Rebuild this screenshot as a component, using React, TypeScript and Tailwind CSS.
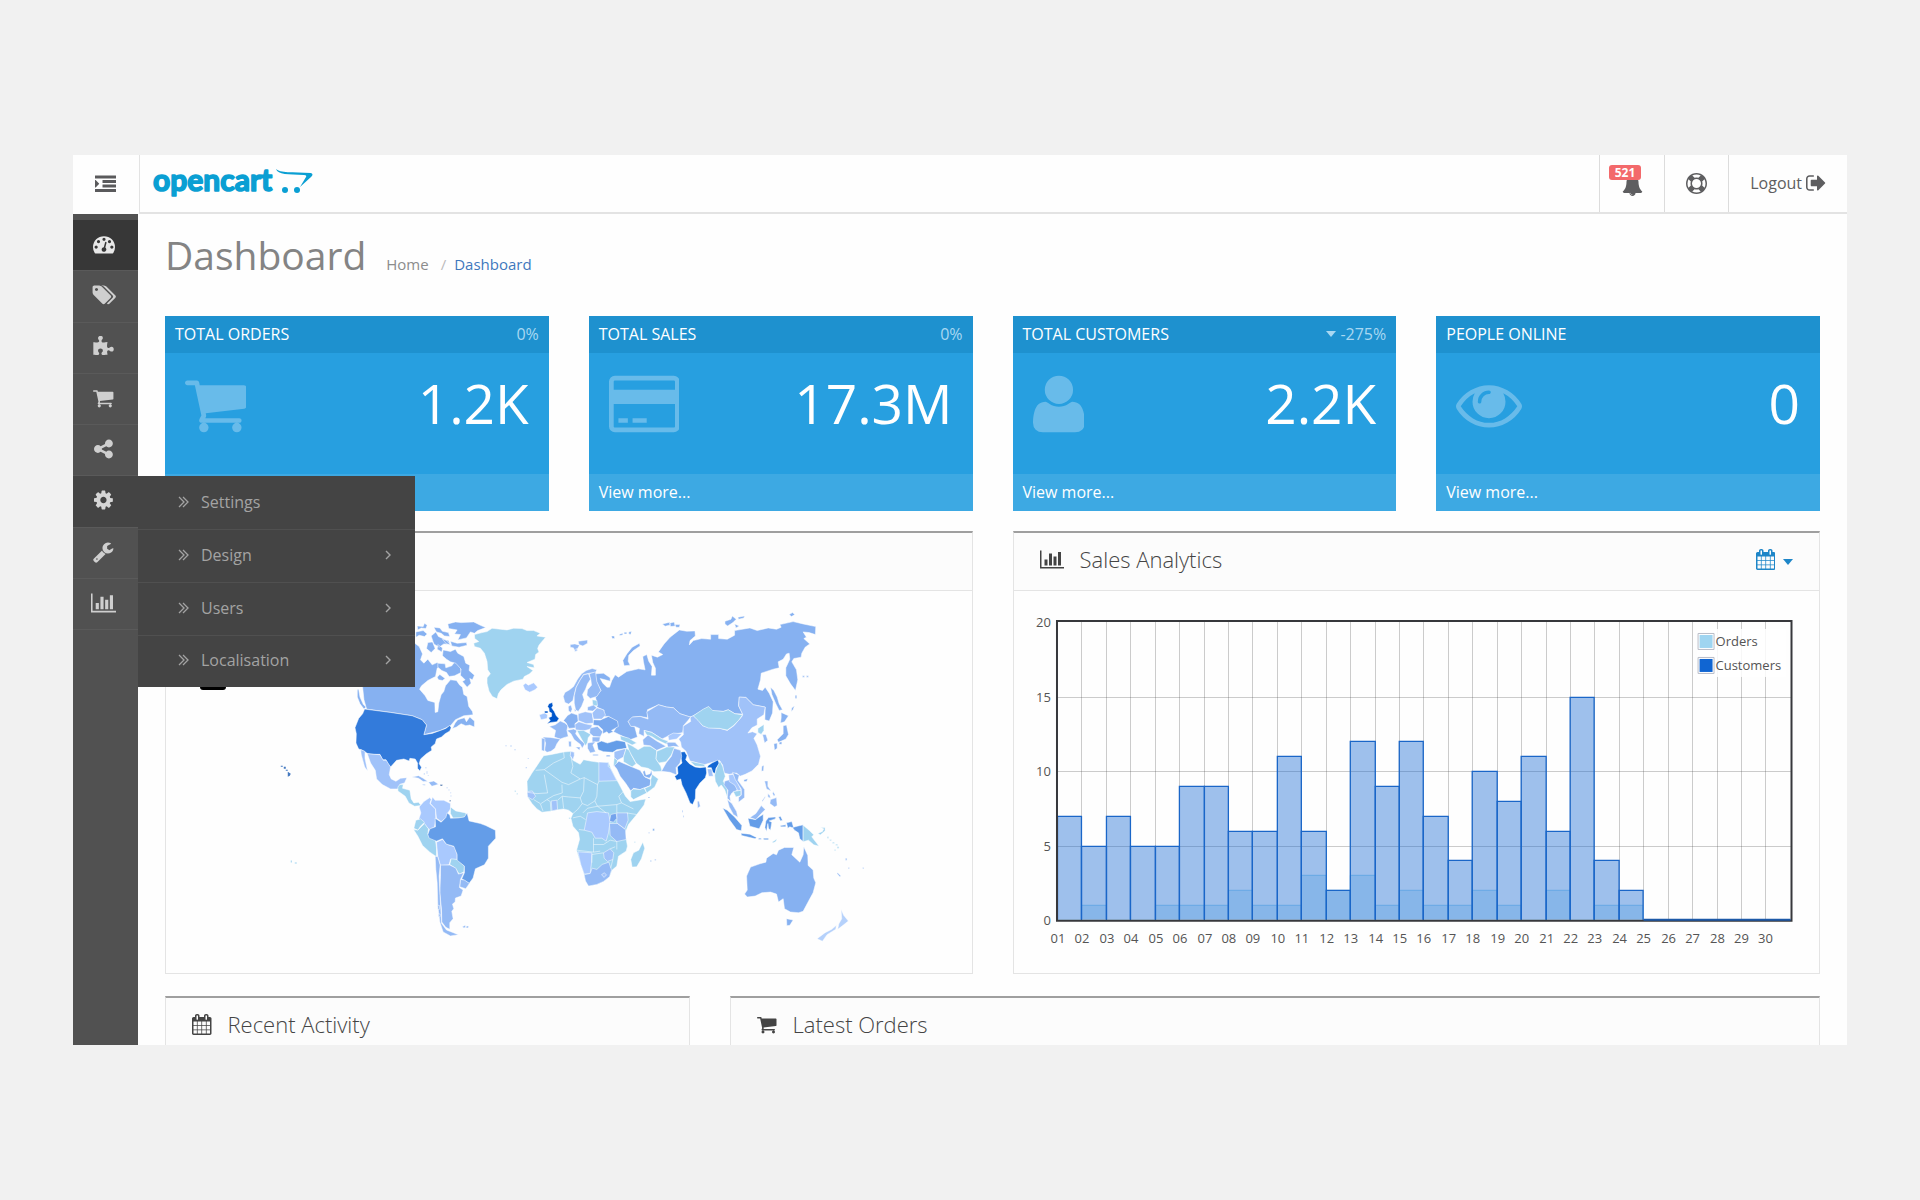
import type { ReactNode } from "react";

type Glyph = { box: string; d: string };

const ICONS: Record<string, Glyph> = {
  cog: {
    box: "128 0 1536 1792",
    d: "M1152 896q0-106-75-181t-181-75-181 75-75 181 75 181 181 75 181-75 75-181zm512-109v222q0 12-8 23t-20 13l-185 28q-19 54-39 91 35 50 107 138 10 12 10 25t-9 23q-27 37-99 108t-94 71q-12 0-26-9l-138-108q-44 23-91 38-16 136-29 186-7 28-36 28h-222q-14 0-24.5-8.5t-11.5-21.5l-28-184q-49-16-90-37l-141 107q-10 9-25 9-14 0-25-11-126-114-165-168-7-10-7-23 0-12 8-23 15-21 51-66.5t54-70.5q-27-50-41-99l-183-27q-13-2-21-12.5t-8-23.5v-222q0-12 8-23t19-13l186-28q14-46 39-92-40-57-107-138-10-12-10-24 0-10 9-23 26-36 98.5-107.5t94.5-71.5q13 0 26 10l138 107q44-23 91-38 16-136 29-186 7-28 36-28h222q14 0 24.5 8.5t11.5 21.5l28 184q49 16 90 37l142-107q9-9 24-9 13 0 25 10 129 119 165 170 7 8 7 22 0 12-8 23-15 21-51 66.5t-54 70.5q26 50 41 98l183 28q13 2 21 12.5t8 23.5z",
  },
  cart: {
    box: "64 0 1664 1792",
    d: "M704 1536q0 52-38 90t-90 38-90-38-38-90 38-90 90-38 90 38 38 90zm896 0q0 52-38 90t-90 38-90-38-38-90 38-90 90-38 90 38 38 90zm128-1088v512q0 24-16.5 42.5t-40.5 21.5l-1044 122q13 60 13 70 0 16-24 64h920q26 0 45 19t19 45-19 45-45 19h-1024q-26 0-45-19t-19-45q0-11 8-31.5t16-36 21.5-40 15.5-29.5l-177-823h-204q-26 0-45-19t-19-45 19-45 45-19h256q16 0 28.5 6.5t19.5 15.5 13 24.5 8 26 5.5 29.5 4.5 26h1201q26 0 45 19t19 45z",
  },
  chart: {
    box: "0 0 2048 1792",
    d: "M640 896v512h-256v-512h256zm384-512v1024h-256v-1024h256zm1024 1152v128h-2048v-1536h128v1408h1920zm-640-896v768h-256v-768h256zm384-384v1152h-256v-1152h256z",
  },
  calendar: {
    box: "64 0 1664 1792",
    d: "M192 1664h288v-288h-288v288zm352 0h320v-288h-320v288zm-352-352h288v-320h-288v320zm352 0h320v-320h-320v320zm-352-384h288v-288h-288v288zm736 736h320v-288h-320v288zm-384-736h320v-288h-320v288zm768 736h288v-288h-288v288zm-384-352h320v-320h-320v320zm-352-864v-288q0-13-9.5-22.5t-22.5-9.5h-64q-13 0-22.5 9.5t-9.5 22.5v288q0 13 9.5 22.5t22.5 9.5h64q13 0 22.5-9.5t9.5-22.5zm736 864h288v-320h-288v320zm-384-384h320v-288h-320v288zm384 0h288v-288h-288v288zm32-480v-288q0-13-9.5-22.5t-22.5-9.5h-64q-13 0-22.5 9.5t-9.5 22.5v288q0 13 9.5 22.5t22.5 9.5h64q13 0 22.5-9.5t9.5-22.5zm384-64v1280q0 52-38 90t-90 38h-1408q-52 0-90-38t-38-90v-1280q0-52 38-90t90-38h128v-96q0-66 47-113t113-47h64q66 0 113 47t47 113v96h384v-96q0-66 47-113t113-47h64q66 0 113 47t47 113v96h128q52 0 90 38t38 90z",
  },
  share: {
    box: "128 0 1536 1792",
    d: "M1344 1024q133 0 226.5 93.5t93.5 226.5-93.5 226.5-226.5 93.5-226.5-93.5-93.5-226.5q0-12 2-34l-360-180q-92 86-218 86-133 0-226.5-93.5t-93.5-226.5 93.5-226.5 226.5-93.5q126 0 218 86l360-180q-2-22-2-34 0-133 93.5-226.5t226.5-93.5 226.5 93.5 93.5 226.5-93.5 226.5-226.5 93.5q-126 0-218-86l-360 180q2 22 2 34t-2 34l360 180q92-86 218-86z",
  },
  wrench: {
    box: "64 0 1664 1792",
    d: "M448 1472q0-26-19-45t-45-19-45 19-19 45 19 45 45 19 45-19 19-45zm644-420l-682 682q-37 37-90 37-52 0-91-37l-106-108q-38-36-38-90 0-53 38-91l681-681q39 98 114.5 173.5t173.5 114.5zm634-435q0 39-23 106-47 134-164.5 217.5t-258.5 83.5q-185 0-316.5-131.5t-131.5-316.5 131.5-316.5 316.5-131.5q58 0 121.5 16.5t107.5 46.5q16 11 16 28t-16 28l-293 169v224l193 107q5-3 79-48.5t135.5-81 70.5-35.5q15 0 23.5 10t8.5 25z",
  },
  tags: {
    box: "0 0 2048 1792",
    d: "M576 448q0-53-37.5-90.5t-90.5-37.5-90.5 37.5-37.5 90.5 37.5 90.5 90.5 37.5 90.5-37.5 37.5-90.5zm1067 576q0 53-37 90l-491 492q-39 37-91 37-53 0-90-37l-715-716q-38-37-64.5-101t-26.5-117v-416q0-52 38-90t90-38h416q53 0 117 26.5t102 64.5l715 714q37 39 37 91zm384 0q0 53-37 90l-491 492q-39 37-91 37-36 0-59-14t-53-45l470-470q37-37 37-90 0-52-37-91l-715-714q-38-38-102-64.5t-117-26.5h224q53 0 117 26.5t102 64.5l715 714q37 39 37 91z",
  },
  gauge: {
    box: "0 0 1792 1792",
    d: "M384 1152q0-53-37.5-90.5t-90.5-37.5-90.5 37.5-37.5 90.5 37.5 90.5 90.5 37.5 90.5-37.5 37.5-90.5zm192-448q0-53-37.5-90.5t-90.5-37.5-90.5 37.5-37.5 90.5 37.5 90.5 90.5 37.5 90.5-37.5 37.5-90.5zm428 481l101-382q6-26-7.5-48.5t-38.5-29.5-48 6.5-30 39.5l-101 382q-60 5-107 43.5t-63 98.5q-20 77 20 146t117 89 146-20 89-117q16-60-6-117t-72-91zm660-33q0-53-37.5-90.5t-90.5-37.5-90.5 37.5-37.5 90.5 37.5 90.5 90.5 37.5 90.5-37.5 37.5-90.5zm-640-640q0-53-37.5-90.5t-90.5-37.5-90.5 37.5-37.5 90.5 37.5 90.5 90.5 37.5 90.5-37.5 37.5-90.5zm448 192q0-53-37.5-90.5t-90.5-37.5-90.5 37.5-37.5 90.5 37.5 90.5 90.5 37.5 90.5-37.5 37.5-90.5zm320 448q0 261-141 483-19 29-54 29h-1402q-35 0-54-29-141-221-141-483 0-182 71-348t191-286 286-191 348-71 348 71 286 191 191 286 71 348z",
  },
  puzzle: {
    box: "64 0 1728 1792",
    d: "M1755 1083q0 81-44.5 135t-123.5 54q-41 0-77.5-17.5t-59-38-56.5-38-71-17.5q-110 0-110 124 0 39 16 115t15 115v5q-22 0-33 1-34 3-97.5 11.5t-115.5 13.5-98 5q-61 0-103-26.5t-42-83.5q0-37 17.5-71t38-56.5 38-59 17.5-77.5q0-79-54-123.5t-135-44.5q-84 0-143 45.5t-59 127.5q0 43 15 83t33.5 64.5 33.5 53 15 50.5q0 45-46 89-37 35-117 35-95 0-245-24-9-2-27.5-4t-27.5-4l-13-2q-1 0-3-1-2 0-2-1v-1024q2 1 17.5 3.5t34 5 21.5 3.5q150 24 245 24 80 0 117-35 46-44 46-89 0-22-15-50.5t-33.5-53-33.5-64.5-15-83q0-82 59-127.5t144-45.5q80 0 134 44.5t54 123.5q0 41-17.5 77.5t-38 59-38 56.5-17.5 71q0 57 42 83.5t103 26.5q64 0 180-15t163-17v2q-1 2-3.5 17.5t-5 34-3.5 21.5q-24 150-24 245 0 80 35 117 44 46 89 46 22 0 50.5-15t53-33.5 64.5-33.5 83-15q82 0 127.5 59t45.5 143z",
  },
  signOut: {
    box: "64 0 1600 1792",
    d: "M704 1440q0 4 1 20t.5 26.5-3 23.5-10 19.5-20.5 6.5h-320q-119 0-203.5-84.5t-84.5-203.5v-704q0-119 84.5-203.5t203.5-84.5h320q13 0 22.5 9.5t9.5 22.5q0 4 1 20t.5 26.5-3 23.5-10 19.5-20.5 6.5h-320q-66 0-113 47t-47 113v704q0 66 47 113t113 47h312l11.5 1 11.5 3 8 5.5 7 9 2 13.5zm928-544q0 26-19 45l-544 544q-19 19-45 19t-45-19-19-45v-288h-448q-26 0-45-19t-19-45v-384q0-26 19-45t45-19h448v-288q0-26 19-45t45-19 45 19l544 544q19 19 19 45z",
  },
  user: {
    box: "192 0 1408 1792",
    d: "M1600 1405q0 120-73 189.5t-194 69.5h-874q-121 0-194-69.5t-73-189.5q0-53 3.5-103.5t14-109 26.5-108.5 43-97.5 62-81 85.5-53.5 111.5-20q9 0 42 21.5t74.5 48 108 48 133.5 21.5 133.5-21.5 108-48 74.5-48 42-21.5q61 0 111.5 20t85.5 53.5 62 81 43 97.5 26.5 108.5 14 109 3.5 103.5zm-320-893q0 159-112.5 271.5t-271.5 112.5-271.5-112.5-112.5-271.5 112.5-271.5 271.5-112.5 271.5 112.5 112.5 271.5z",
  },
  eye: {
    box: "0 0 1792 1792",
    d: "M1664 960q-152-236-381-353 61 104 61 225 0 185-131.5 316.5t-316.5 131.5-316.5-131.5-131.5-316.5q0-121 61-225-229 117-381 353 133 205 333.5 326.5t434.5 121.5 434.5-121.5 333.5-326.5zm-720-384q0-20-14-34t-34-14q-125 0-214.5 89.5t-89.5 214.5q0 20 14 34t34 14 34-14 14-34q0-86 61-147t147-61q20 0 34-14t14-34zm848 384q0 34-20 69-140 230-376.5 368.5t-499.5 138.5-499.5-139-376.5-368q-20-35-20-69t20-69q140-229 376.5-368t499.5-139 499.5 139 376.5 368q20 35 20 69z",
  },
  card: {
    box: "0 0 1920 1792",
    d: "M1760 128q66 0 113 47t47 113v1216q0 66-47 113t-113 47h-1600q-66 0-113-47t-47-113v-1216q0-66 47-113t113-47h1600zm-1600 128q-13 0-22.5 9.5t-9.5 22.5v224h1664v-224q0-13-9.5-22.5t-22.5-9.5h-1600zm1600 1280q13 0 22.5-9.5t9.5-22.5v-608h-1664v608q0 13 9.5 22.5t22.5 9.5h1600zm-1504-128v-128h256v128h-256zm384 0v-128h384v128h-384z",
  },
  ring: {
    box: "0 0 1792 1792",
    d: "M896 0q182 0 348 71t286 191 191 286 71 348-71 348-191 286-286 191-348 71-348-71-286-191-191-286-71-348 71-348 191-286 286-191 348-71zm0 128q-190 0-361 90l194 194q82-28 167-28t167 28l194-194q-171-90-361-90zm-678 1129l194-194q-28-82-28-167t28-167l-194-194q-90 171-90 361t90 361zm678 407q190 0 361-90l-194-194q-82 28-167 28t-167-28l-194 194q171 90 361 90zm0-384q159 0 271.5-112.5t112.5-271.5-112.5-271.5-271.5-112.5-271.5 112.5-112.5 271.5 112.5 271.5 271.5 112.5zm484-217l194 194q90-171 90-361t-90-361l-194 194q28 82 28 167t-28 167z",
  },
  bell: {
    box: "0 0 1792 1792",
    d: "M912 1696q0-16-16-16-59 0-101.5-42.5t-42.5-101.5q0-16-16-16t-16 16q0 73 51.5 124.5t124.5 51.5q16 0 16-16zm816-288q0 52-38 90t-90 38h-448q0 106-75 181t-181 75-181-75-75-181h-448q-52 0-90-38t-38-90q50-42 91-88t85-119.5 74.5-158.5 50-206 19.5-260q0-152 117-282.5t307-158.5q-8-19-8-39 0-40 28-68t68-28 68 28 28 68q0 20-8 39 190 28 307 158.5t117 282.5q0 139 19.5 260t50 206 74.5 158.5 85 119.5 91 88z",
  },
  indent: {
    box: "0 0 1792 1792",
    d: "M352 832q0 14-9 23l-288 288q-9 9-23 9-13 0-22.5-9.5t-9.5-22.5v-576q0-13 9.5-22.5t22.5-9.5q14 0 23 9l288 288q9 9 9 23zm1440 480v192q0 13-9.5 22.5t-22.5 9.5h-1728q-13 0-22.5-9.5t-9.5-22.5v-192q0-13 9.5-22.5t22.5-9.5h1728q13 0 22.5 9.5t9.5 22.5zm0-384v192q0 13-9.5 22.5t-22.5 9.5h-1088q-13 0-22.5-9.5t-9.5-22.5v-192q0-13 9.5-22.5t22.5-9.5h1088q13 0 22.5 9.5t9.5 22.5zm0-384v192q0 13-9.5 22.5t-22.5 9.5h-1088q-13 0-22.5-9.5t-9.5-22.5v-192q0-13 9.5-22.5t22.5-9.5h1088q13 0 22.5 9.5t9.5 22.5zm0-384v192q0 13-9.5 22.5t-22.5 9.5h-1728q-13 0-22.5-9.5t-9.5-22.5v-192q0-13 9.5-22.5t22.5-9.5h1728q13 0 22.5 9.5t9.5 22.5z",
  },
};

function Icon({ name, className }: { name: string; className: string }) {
  const g = ICONS[name];
  return (
    <svg viewBox={g.box} className={`w-auto shrink-0 fill-current ${className}`} aria-hidden="true">
      <path d={g.d} />
    </svg>
  );
}

function Logo() {
  return (
    <svg viewBox="0 0 164 52" className="h-[52px] w-[164px]" role="img" aria-label="opencart">
      <text
        x="1"
        y="36"
        fontFamily="Lato, sans-serif"
        fontWeight="700"
        fontSize="30"
        fill="#0a9fd3"
        stroke="#0a9fd3"
        strokeWidth="1.6"
        strokeLinejoin="round"
      >
        opencart
      </text>
      <path d="M124 14C128 18 140 17 159 18Q162 19 159 22L148 32 154 22Q155 20 152 20C136 19 126 20 124 14Z" fill="#0a9fd3" />
      <circle cx="133" cy="35" r="3" fill="#0a9fd3" />
      <circle cx="145" cy="35" r="3" fill="#0a9fd3" />
    </svg>
  );
}

const NAV = [
  { icon: "gauge", label: "Dashboard" },
  { icon: "tags", label: "Catalog" },
  { icon: "puzzle", label: "Extensions" },
  { icon: "cart", label: "Sales" },
  { icon: "share", label: "Marketing" },
  { icon: "cog", label: "System" },
  { icon: "wrench", label: "Tools" },
  { icon: "chart", label: "Reports" },
];

const SUBMENU = [
  { label: "Settings", more: false },
  { label: "Design", more: true },
  { label: "Users", more: true },
  { label: "Localisation", more: true },
];

function SystemMenu() {
  return (
    <ul className="absolute top-0 left-full z-20 grid h-[211px] w-[277px] grid-rows-4 bg-[#444444]">
      {SUBMENU.map((item, i) => (
        <li key={item.label} className={i > 0 ? "border-t border-[#505050]" : ""}>
          <a href="#" className="flex h-full items-center pr-6 pb-0.5 pl-10 text-base text-[#a3a3a3]">
            <svg viewBox="0 0 11 12" className="mr-3 h-3 w-[11px] fill-none stroke-current" aria-hidden="true">
              <path d="M1 1l5 5-5 5M5 1l5 5-5 5" strokeWidth="1.300" />
            </svg>
            <span className="flex-1">{item.label}</span>
            {item.more && (
              <svg viewBox="0 0 6 10" className="h-2.5 w-1.5 fill-none stroke-current" aria-hidden="true">
                <path d="M1 1l4 4-4 4" strokeWidth="1.400" />
              </svg>
            )}
          </a>
        </li>
      ))}
    </ul>
  );
}

function Sidebar() {
  return (
    <nav className="w-[65px] shrink-0 bg-[#515151] pt-1.5">
      <ul className="grid h-[410px] grid-rows-8">
        {NAV.map((item) => {
          const tone =
            item.icon === "gauge"
              ? "bg-[#373737] text-[#e8e8e8]"
              : item.icon === "cog"
                ? "bg-[#444444] text-[#d6d6d6]"
                : "text-[#cfcfcf]";
          return (
            <li key={item.icon} className={`relative border-b border-[#5a5a5a] ${tone}`}>
              <a href="#" aria-label={item.label} className="flex h-full items-center justify-center pr-1 pb-0.5">
                <Icon name={item.icon} className="h-[22px]" />
              </a>
              {item.icon === "cog" && <SystemMenu />}
            </li>
          );
        })}
      </ul>
    </nav>
  );
}

function Header() {
  return (
    <header className="flex h-[59px] shrink-0">
      <button type="button" aria-label="Toggle menu" className="flex w-[66px] items-center justify-center pr-0.5 text-[#5a5a5c]">
        <Icon name="indent" className="h-[21px]" />
      </button>
      <div className="flex flex-1 border-b-2 border-l border-[#e3e3e3] text-[#5e5e60]">
        <a href="#" className="flex-1 pl-3">
          <Logo />
        </a>
        <button
          type="button"
          aria-label="Notifications"
          className="relative flex w-[65px] items-center justify-center border-l border-[#dcdcdc]"
        >
          <Icon name="bell" className="mt-1 h-[21px]" />
          <span className="absolute top-2.5 left-[9px] flex h-[15px] w-8 items-center justify-center rounded-[3px] bg-[#f3696b] text-xs font-bold text-white">
            521
          </span>
        </button>
        <button type="button" aria-label="Help" className="flex w-16 items-center justify-center border-l border-[#dcdcdc]">
          <Icon name="ring" className="h-[21px]" />
        </button>
        <a href="#" className="flex w-[119px] items-center justify-center gap-1 border-l border-[#dcdcdc] pb-0.5 text-base">
          Logout
          <Icon name="signOut" className="h-[22px]" />
        </a>
      </div>
    </header>
  );
}

type TileProps = { title: string; change?: string; down?: boolean; icon: string; value: string; more?: string };

function Tile({ title, change, down, icon, value, more }: TileProps) {
  return (
    <section className="flex flex-col text-white">
      <div className="flex h-[37px] items-center justify-between bg-[#1e91cf] px-2.5 pb-0.5">
        <h2 className="text-base">{title}</h2>
        {change && (
          <span className="flex items-center gap-1 text-base text-[#a9d8f2]">
            {down && (
              <svg viewBox="0 0 10 6" className="h-1.5 w-2.5 fill-current" aria-hidden="true">
                <path d="M0 0h10L5 6z" />
              </svg>
            )}
            {change}
          </span>
        )}
      </div>
      <div className="flex h-[121px] justify-between bg-[#279fe0] px-5 pt-[18px]">
        <Icon name={icon} className="h-[66px] text-[#68bbea]" />
        <span className="text-[55px] leading-[64px]">{value}</span>
      </div>
      <a href="#" aria-label={`${title}: view more`} className="flex h-[37px] items-center bg-[#3da9e3] px-2.5 pb-0.5 text-base">
        {more}
      </a>
    </section>
  );
}

type PanelProps = { icon?: string; title?: string; action?: ReactNode; children?: ReactNode; className?: string };

function Panel({ icon, title, action, children, className = "" }: PanelProps) {
  return (
    <section className={`border border-t-2 border-[#e4e4e4] border-t-[#9f9f9f] ${className}`}>
      <div className="flex h-[58px] items-center border-b border-[#e4e4e4] bg-[#fcfcfc] px-[26px] pb-1 text-[#444444]">
        {icon && <Icon name={icon} className="mr-4 h-[21px]" />}
        {title && <h2 className="text-[22px] font-light">{title}</h2>}
        {action}
      </div>
      {children}
    </section>
  );
}

const LIGHT = "#9fd3f0";
const PALE = "#a9c9fe";
const SOFT = "#a0c2f9";
const MID = "#94baf5";
const RUS = "#86b1f1";
const DEEP = "#649de8";
const USA = "#337bdb";

type Land = [string, string];

const AMERICAS: Land[] = [
  [RUS, "M50 240L66 262 70 300 78 328 150 338 215 348 245 360 258 376 250 405 300 392 330 378 345 360 370 348 398 345 396 335 385 320 380 290 370 284 366 262 358 256 348 242 330 240 315 258 310 275 302 285 295 310 292 336 284 338 283 308 262 302 254 288 237 268 243 258 262 242 285 230 290 205 300 196 290 188 275 195 262 178 250 190 240 180 246 162 236 140 220 128 180 130Z"],
  [RUS, "M292 190l22 2 2 12 18-6 10-14 16 16 2 18-20 10-16 2-8-12-14-6-12-10Z"],
  [RUS, "M308 150L330 155 345 148 352 160 370 170 376 190 388 196 386 212 402 226 396 240 388 236 392 250 380 262 366 245 374 240 360 226 362 208 346 190 330 186 318 178 306 168Z"],
  [RUS, "M322 72L345 66 362 68 400 66 420 76 436 83 412 92 402 100 390 96 378 114 352 120 360 104 342 102 350 90 325 86Z"],
  [RUS, "M280 82l18 2 8 10 18 4 4 12-16-2-10-8-14-4Z M230 78l18 2 4-10 8 6-4 10-14-2-10 6Z M226 96l22-4 12 10-8 8-16-4-10 6Z M272 108l14-12 8 14 22 10 14 14-20-2-14 10-16-10Z M262 128l14-2 8 20-12 12-14-12Z M330 124l20 6 28-2 2 8-24 6-22-4Z M306 118l18 4 6 14-12-4Z M292 134l14 10-2 12-14-8Z"],
  [RUS, "M352 360l20-6 6 12 10-14 14 12 0 18-14-6-12 2-14-6-14 10-12 4 8-16Z M290 232l8-8 16 12-8 6-12-2Z"],
  [RUS, "M50 270l4-2 4 24 10 22 8 8-6 6-12-16-8-20Z"],
  [USA, "M72 328L150 338 215 348 245 360 258 376 250 405 275 401 300 392 316 386 328 377 332 384 328 394 314 402 303 412 288 418 284 432 272 442 274 452 258 462 240 478 236 492 243 503 238 514 231 506 231 490 224 478 208 476 206 484 190 478 168 482 150 502 142 492 136 480 126 480 118 464 100 464 82 462 62 450 54 448 46 430 47 402 43 384 54 356 66 342Z"],
  [LIGHT, "M402 104L425 98 440 95 455 85 480 88 500 90 520 85 545 86 560 92 580 92 600 100 590 108 616 112 604 126 596 136 592 146 596 156 586 164 584 178 560 188 580 194 582 204 560 200 578 212 568 222 552 230 548 238 520 244 500 254 482 270 474 282 470 297 456 290 446 274 440 250 440 234 450 222 442 210 440 185 432 160 420 145 402 140 400 130 415 125 403 116Z"],
  [SOFT, "M80 462L100 464 118 465 128 482 137 482 150 502 146 525 152 538 166 545 180 536 199 534 192 550 178 554 172 568 150 568 125 555 108 538 104 512 90 490Z"],
  [SOFT, "M60 450L73 455 73 476 81 514 72 502 66 480 62 466Z"],
  [LIGHT, "M172 562L178 555 188 555 186 566 208 572 212 598 220 610 234 608 242 618 222 620 205 610 194 590 172 574Z"],
  [MID, "M214 532l20-4 14 8 14 10-14 0-14-10Z M264 548l16-4 14 10-20 6Z M246 554l8 0 0 4-8-2Z"],
  ["#2f5f9f", "M299 555h7v4h-7Z M327 601h4v5h-4Z"],
  [MID, "M254 503h4v3h-4Z M258 514h3v8h-3Z M250 520h3v5h-3Z M262 526h3v3h-3Z M318 563h4v3h-4Z M324 570h3v3h-3Z M329 578h3v3h-3Z M330 588h3v3h-3Z"],
  [PALE, "M236 622L250 606 268 594 272 600 268 612 285 628 286 656 282 682 266 690 250 672 235 658 241 640Z"],
  [PALE, "M270 612L276 592 284 602 310 602 330 612 330 628 322 640 318 654 302 666 288 656 285 628Z"],
  [LIGHT, "M330 622L346 634 376 640 378 650 365 655 338 656 330 642Z"],
  [LIGHT, "M226 662L240 658 252 668 240 680 232 692 220 686Z"],
  [LIGHT, "M219 690L232 692 252 672 264 688 262 704 285 722 288 745 288 772 268 758 246 738 232 710Z"],
  [PALE, "M288 728L306 720 318 734 342 742 350 765 350 782 330 780 326 796 300 798 292 772Z"],
  [LIGHT, "M328 795L332 778 350 780 372 800 370 818 356 824 345 806Z"],
  [DEEP, "M262 705L268 688 285 682 284 656 302 668 316 654 320 640 328 646 330 656 355 655 372 652 380 640 386 664 420 672 436 678 465 692 466 716 444 740 444 776 432 796 405 808 398 836 386 852 364 838 372 820 372 800 350 782 350 765 340 740 318 734 306 718 288 725 266 716Z"],
  [MID, "M360 840L372 842 387 852 376 868 358 862Z"],
  [MID, "M300 797L328 797 346 806 354 824 370 820 360 840 357 864 368 872 362 890 345 896 344 908 336 914 340 928 334 936 338 958 328 970 328 990 316 984 304 968 303 930 298 880 300 830Z"],
  [MID, "M284 770L292 772 299 797 296 830 298 880 301 930 303 972 318 992 354 1006 330 1010 308 998 298 968 292 920 290 850 286 810Z"],
  [MID, "M366 982l8-4 2 6-6 2Z M378 980l7 0-2 6-6 0Z M292 918h5v12h-5Z M294 944h5v8h-5Z"],
];

const WEST: Land[] = [
  [PALE, "M68 256L76 250 84 256 100 249 112 262 104 270 88 277 74 270Z"],
  [MID, "M210 134l14-2 14 4-6 10-8 10-4-12-10-2Z M234 124l28-4 0 10-14 8-12-4Z M222 150l8-4 2 6-8 4Z"],
  [RUS, "M334 108l8 0 2 8-8 0Z M358 103l10-3 0 5-10 2Z M372 97l8 0 0 5-8 0Z M386 96l8-2-2 10-6-2Z"],
  [MID, "M189 290L194 278 208 270 220 260 232 238 244 222 258 212 276 206 290 210 286 218 268 220 250 224 240 240 228 262 222 285 218 302 205 313 194 308Z"],
  [MID, "M222 288L228 262 240 240 250 225 265 222 271 238 262 252 256 268 247 284 252 300 244 320 234 335 226 330 222 310Z"],
  [MID, "M267 222L286 216 290 245 302 272 290 290 270 296 260 286 262 270 274 256 272 240Z"],
  ["#0056cb", "M146 312L156 308 158 318 154 324 162 335 168 348 176 356 170 366 152 368 140 372 150 362 145 354 154 350 154 340 147 336 146 326 142 320Z M133 334h10v6h-10Z"],
  [PALE, "M117 345L134 340 142 346 140 356 122 360Z"],
  [MID, "M147 380L165 375 180 364 194 370 203 378 200 392 204 410 190 414 180 418 162 412 166 392Z"],
  [MID, "M128 412L150 413 180 418 170 432 164 446 152 455 140 458 133 452 136 430Z"],
  [MID, "M124 415L134 417 132 455 124 452Z"],
  [RUS, "M202 347L214 340 232 346 234 364 224 372 230 384 206 386 198 370 190 362Z"],
  [MID, "M204 320l8-4 4 12-4 10-7-4Z M222 328l6 4-4 4Z"],
  [SOFT, "M234 342L255 336 276 340 280 370 258 372 234 362Z"],
  [MID, "M200 392L220 388 230 392 226 402 240 420 254 432 246 446 240 434 222 420 212 402Z M226 442l14 0-2 10Z M205 425h8v16h-7Z"],
  [SOFT, "M224 374L236 366 258 373 276 376 272 388 248 394 226 390Z"],
  [LIGHT, "M230 392L250 392 272 404 264 414 262 428 256 438 244 418Z"],
  [MID, "M270 385L292 380 308 396 300 412 280 410 268 400Z"],
  [MID, "M276 412L300 412 298 426 276 428Z"],
  [MID, "M262 430L286 426 278 436 286 456 270 460 262 446Z M278 464h16v4h-16Z M318 466h12v5h-12Z"],
  ["#7aa9ee", "M280 360L300 361 325 350 352 364 355 380 334 392 340 396 326 402 320 396 308 402 308 390 295 378 279 376Z"],
  [SOFT, "M276 340L290 324 310 330 316 346 305 358 280 358Z"],
  [LIGHT, "M276 300l14 2 2 16-14 0Z"],
  [MID, "M262 322l18-6 10 8-12 10-16-2Z"],
  [DEEP, "M290 430L304 424 322 430 350 422 375 426 380 446 350 450 338 458 310 456 294 450Z"],
  [LIGHT, "M130 468L150 465 190 457 212 455 212 470 218 482 240 494 250 480 270 484 296 488 325 488 332 506 344 530 356 552 376 590 390 606 437 598 432 616 410 645 385 675 375 700 382 740 378 755 355 770 350 800 336 812 328 832 310 846 290 855 265 860 256 845 250 820 240 790 229 752 238 720 235 700 218 680 212 656 218 642 205 632 190 628 165 632 150 635 125 638 110 628 95 612 82 592 80 545 95 520 110 498Z"],
  [SOFT, "M212 455L222 458 222 468 218 480 210 468Z"],
  [PALE, "M296 487L325 489 324 500 332 508 350 543 296 545Z"],
  [PALE, "M262 640L290 636 325 640 330 665 325 700 318 725 305 716 285 716 275 698 252 692 258 662Z"],
  [MID, "M328 672L352 672 376 690 378 720 350 726 330 708Z"],
  [SOFT, "M350 640L382 640 384 662 374 688 350 670Z"],
  ["#74a3ec", "M332 645L348 641 350 656 340 668 328 665Z"],
  [PALE, "M233 757L275 760 274 790 270 822 252 824 242 796Z"],
  [MID, "M252 826L270 822 276 806 290 810 306 795 326 788 334 812 328 832 310 846 290 855 265 860 256 845Z"],
  [SOFT, "M310 760L330 748 341 760 338 780 322 786 312 776Z"],
  [SOFT, "M153 604L170 602 172 630 155 634Z"],
  [SOFT, "M80 576L96 574 106 590 96 600 82 592Z"],
  [SOFT, "M304 826L312 820 319 826 312 834Z"],
  [LIGHT, "M428 728L434 746 424 778 410 802 396 803 392 780 400 760 416 752Z"],
  [SOFT, "M342 456L378 446 370 472 352 482 342 474Z"],
  [LIGHT, "M378 446L388 452 394 466 408 492 396 502 370 486 370 472Z M342 474l10 8-2 14-10 4Z"],
  [RUS, "M342 498L356 485 396 502 420 512 434 532 452 540 450 558 420 570 400 566 392 574 376 550 360 530 350 508Z"],
  [LIGHT, "M392 574L400 568 420 570 432 565 440 580 400 600 392 592Z"],
  [LIGHT, "M452 540L456 524 475 538 464 562 440 580 434 566 452 558Z"],
  [RUS, "M428 516l6-4 4 14 12-4 4-12 2 14-8 12-16-6Z"],
  [LIGHT, "M360 408L385 415 410 430 396 436 384 430 362 420Z"],
  [LIGHT, "M380 430L398 440 414 450 432 440 450 440 470 452 468 478 482 500 486 515 462 516 444 506 424 502 408 490 394 466 386 450Z"],
  [MID, "M384 365L396 352 420 350 444 358 440 336 475 315 500 322 520 324 540 342 572 352 564 362 550 378 548 398 506 408 486 418 455 398 432 392 432 410 416 402 418 386 404 380 392 380Z"],
  [LIGHT, "M432 392L455 398 486 418 504 424 500 434 470 420 455 410 440 406Z"],
  [MID, "M428 420L444 406 470 424 498 440 470 452 450 438 430 436Z"],
  [PALE, "M504 408L520 400 546 402 530 418 506 422Z"],
  [MID, "M500 428L525 428 538 442 520 440 504 444Z"],
  [LIGHT, "M470 455L500 442 524 442 514 466 498 486 476 490 468 478Z"],
  [MID, "M484 515L498 490 514 470 522 446 542 452 545 470 540 490 528 504 530 526 510 518Z"],
  [DEEP, "M444 592h5v3h-5Z M458 688h5v6h-5Z M450 783h4v3h-4Z M464 779h4v3h-4Z"],
  [MID, "M15 437h4v3h-4Z M30 437h4v4h-4Z M42 448h4v4h-4Z M76 502h4v4h-4Z M82 475h4v3h-4Z M546 632h3v6h-3Z M549 648h3v5h-3Z M445 698h4v3h-4Z"],
  [LIGHT, "M43 573h4v4h-4Z M49 581h4v4h-4Z M206 654h4v4h-4Z M402 727h4v3h-4Z"],
];

const AFRICA_BORDERS =
  "M190 457L192 475 160 490 132 510 106 512 M132 510L185 548 205 555 240 538 M132 525L142 580 110 582 80 578 M212 470L218 500 212 520 240 538 M240 538L252 534 292 555 296 545 M292 555L290 590 284 604 292 620 M185 555L186 580 160 588 140 600 122 612 M186 590L205 592 240 595 250 575 252 534 M240 595L246 612 232 630 218 642 M246 612L262 618 284 604 M248 640L262 626 292 620 318 640 M292 620L350 615 364 610 356 590 370 575 M350 615L350 640 M380 640L410 645 M364 610L400 628 M100 600L120 612 128 634 M140 600L150 606 152 634 M172 602L186 590 190 626 M218 655L240 650 256 660 M236 690L252 692 M229 752L280 758 300 755 M280 716L280 758 M280 735L310 735 330 722 350 726 350 750 M275 790L275 765 310 760 M330 748L345 742 M338 780L332 805";

const EAST: Land[] = [
  [RUS, "M-135 222L-110 220 -90 234 -90 244 -105 240 -120 236 -112 250 -100 262 -92 262 -85 242 -75 225 -65 232 -40 215 -5 207 15 210 10 186 8 170 20 164 26 184 36 200 34 226 46 226 46 205 38 188 34 166 52 172 68 164 55 156 72 132 90 112 118 90 140 94 165 93 166 108 150 122 148 135 160 122 185 116 212 118 212 104 236 104 236 116 262 118 284 106 284 92 330 84 352 92 385 84 410 88 424 82 420 74 460 65 490 72 528 80 527 104 508 98 490 96 500 112 492 116 510 132 496 142 486 160 484 172 462 176 456 186 470 210 474 240 467 272 452 252 438 228 438 204 450 178 448 160 440 162 430 178 415 186 418 204 400 208 364 220 362 240 354 268 368 272 376 262 388 280 400 306 398 340 388 364 375 360 376 322 340 315 318 293 298 292 296 318 308 343 285 342 265 330 250 335 215 333 206 322 190 330 160 348 150 352 120 342 100 324 80 322 55 315 22 330 22 354 0 350 -22 352 -36 365 -28 378 -16 382 -8 412 -30 420 -60 406 -80 396 -70 380 -68 366 -95 350 -115 350 -108 332 -130 322 -132 302 -134 292 -118 272 -132 245Z"],
  [RUS, "M-52 182L-40 162 -24 142 -2 130 0 138 -20 152 -34 166 -36 184 -30 196 -48 198Z"],
  [RUS, "M67 72l22-5 2 8-16 4Z M88 70l14-4 4 12-14 2Z M104 74l16 0-2 8-10 0Z M255 64l18-6 4-10 12 10-10 10-16 10-8-6Z M294 52l20-4-2 6-16 4Z M284 72l14 6-10 6Z M448 44l10-6 7 6-10 6Z"],
  [RUS, "M392 262L402 272 412 292 418 312 428 330 418 332 408 312 396 284Z M466 286h5v10h-5Z M456 324l8-5-4 10-6 6Z M488 228h6v4h-6Z M500 228h6v4h-6Z"],
  [SOFT, "M150 352L160 348 176 362 188 378 210 384 240 386 262 392 282 378 306 350 308 343 296 318 298 292 318 293 340 315 376 322 372 345 352 358 352 376 336 384 324 400 338 396 352 402 342 416 352 436 362 470 356 494 336 514 316 524 300 530 290 520 268 524 252 520 248 496 238 482 210 490 190 496 165 488 150 484 138 455 124 442 122 428 116 418 130 405 128 380 152 365Z"],
  [LIGHT, "M160 348L190 328 206 320 218 332 250 335 265 330 285 342 308 345 296 362 280 378 262 391 240 386 205 385 188 378 174 362Z"],
  ["#1367d4", "M116 458L134 456 141 468 137 480 148 492 165 502 180 504 198 502 200 520 196 534 180 550 167 570 166 596 158 615 150 610 138 580 126 556 122 538 110 542 104 530 114 522 112 502 126 490 122 472Z M204 498L216 490 234 481 238 492 228 506 226 522 218 518 214 504 202 504Z"],
  [LIGHT, "M150 485L165 488 192 494 196 501 165 499Z"],
  [SOFT, "M202 508L215 508 220 530 206 530Z"],
  [MID, "M172 606l5-2 4 16-8 6Z"],
  [LIGHT, "M224 526L230 506 240 484 248 500 256 530 250 545 262 566 264 598 254 570 244 556 236 564 226 545Z"],
  [MID, "M254 545L268 540 290 558 292 572 276 580 270 590 272 606 262 596 264 572 252 556Z"],
  [PALE, "M266 526L280 524 304 572 294 574 284 556 268 546Z"],
  [MID, "M278 518L298 526 294 542 314 570 314 594 296 608 296 594 304 586 304 568 286 540Z"],
  [LIGHT, "M280 576L303 572 303 588 288 592Z"],
  [MID, "M262 600L276 612 290 636 294 654 280 644 268 622Z"],
  [LIGHT, "M354 386L372 374 372 392 364 404 354 398Z"],
  [MID, "M368 404L378 404 384 422 374 430Z"],
  [RUS, "M424 338L446 348 434 366 422 370 424 354Z M430 378L440 376 446 404 438 418 416 428 412 420 430 402Z M402 432l10-2 0 16-8 6Z M418 428l8-2 0 8-8 0Z"],
  [RUS, "M366 500l6-3-1 16-6 2Z M312 540l12-3-4 9-8 0Z"],
  [MID, "M374 544L384 544 384 560 394 574 380 568Z M392 600L410 594 412 618 404 622 390 612Z M366 604l10-14 0 4-8 12Z M384 582l6 6 2 8-8-4Z M400 576l6 10-4 4-4-8Z"],
  [DEEP, "M248 625L262 632 284 652 306 678 304 694 290 690 268 660Z M303 701L330 704 350 714 346 718 305 708Z M324 656L346 660 370 644 370 662 358 688 330 680Z"],
  [MID, "M330 654L348 642 364 618 376 630 362 644 348 660Z"],
  [DEEP, "M378 664L386 654 408 652 406 658 388 664 396 668 392 692 386 686 384 672 380 696 375 684Z M416 652l6-2 6 12-6 2Z M422 678l16-2 0 6-16 0Z M440 670l16-4 6 20-12-4-6 4Z M356 716h8v4h-8Z M370 716l16 0 0 5-14 0Z"],
  [LIGHT, "M396 728l16-10-4 8-8 4Z"],
  [DEEP, "M458 684L472 680 490 676 490 726 480 718 476 700 464 692Z"],
  [LIGHT, "M490 677L508 692 522 706 516 712 538 740 522 736 506 722 490 727Z M534 702l14-6 4-8-10-4 14 0 0 10-14 12Z M562 712h5v4h-5Z M570 720h5v4h-5Z M578 728h6v4h-6Z M588 734h6v4h-6Z M592 742h6v4h-6Z M584 750h4v4h-4Z"],
  [MID, "M617 776h5v6h-5Z M625 804h4v4h-4Z M669 804h4v4h-4Z M594 820l10 10-4 2-8-10Z"],
  [RUS, "M314 884L322 872 320 830 332 803 360 793 378 788 380 776 400 762 410 766 416 752 434 744 462 744 456 766 480 788 490 766 492 742 504 768 505 798 520 812 522 836 528 850 520 880 508 902 490 936 476 940 452 938 434 928 430 898 416 908 410 884 392 878 366 880 346 890 322 893Z M440 958L460 962 450 978 441 979Z"],
  ["#b5d1fb", "M604 930L612 948 626 965 610 978 594 990 597 974 606 958Z M590 978L588 990 562 1006 548 1026 532 1018 556 1000 576 990Z"],
];

function LandGroup({ x, y, lands }: { x: number; y: number; lands: Land[] }) {
  return (
    <g transform={`translate(${x} ${y}) scale(0.3333)`}>
      {lands.map(([fill, d], i) => (
        <path key={i} d={d} fill={fill} />
      ))}
    </g>
  );
}

function WorldMap() {
  return (
    <div className="relative">
      <svg viewBox="165 591 807 382" className="block w-full" role="img" aria-label="World map of orders">
        <g stroke="#ffffff" strokeOpacity="0.75" strokeWidth="2" strokeLinejoin="round">
          <LandGroup x={340} y={600} lands={AMERICAS} />
          <LandGroup x={640} y={600} lands={EAST} />
          <LandGroup x={500} y={600} lands={WEST} />
          <path transform="translate(500 600) scale(0.3333)" d={AFRICA_BORDERS} fill="none" />
        </g>
        <path d="M280 766h2v1h-2z M283 767h2v2h-2z M285 770h2v1h-2z M287 772l3 2-1 2-2 1z" fill="#4479c0" />
        <path d="M290 861h1v2h-1z M294 863h2v1h-2z" fill={LIGHT} />
      </svg>
      <button type="button" aria-label="Zoom out" className="absolute top-[73px] left-[34px] size-[26px] rounded-[3px] bg-black" />
    </div>
  );
}

const CUSTOMERS = [7, 5, 7, 5, 5, 9, 9, 6, 6, 11, 6, 2, 12, 9, 12, 7, 4, 10, 8, 11, 6, 15, 4, 2, 0, 0, 0, 0, 0, 0];
const ORDERS = [0, 1, 0, 0, 1, 1, 1, 2, 1, 1, 3, 2, 3, 1, 2, 1, 1, 2, 1, 0, 2, 0, 1, 1, 0, 0, 0, 0, 0, 0];

function SalesChart() {
  const left = 43;
  const base = 329;
  const stepX = 24.43;
  const unit = 14.9;
  const xAt = (i: number) => Math.round(left + i * stepX);
  const yAt = (v: number) => Math.round(base - v * unit);
  return (
    <svg viewBox="0 0 806 382" className="block w-full" role="img" aria-label="Orders and customers per day">
      <g stroke="#545454" strokeOpacity="0.3" strokeWidth="1" shapeRendering="crispEdges">
        {CUSTOMERS.map((_, i) => (
          <path key={i} d={`M${xAt(i)}.5 31V329`} />
        ))}
        {[5, 10, 15].map((v) => (
          <path key={v} d={`M43 ${yAt(v)}.5H778`} />
        ))}
      </g>
      <g fill="#9fd5f1" fillOpacity="0.4" stroke="#9fd5f1">
        {ORDERS.map((v, i) => (
          <path key={i} d={`M${xAt(i)}.5 ${base}V${yAt(v)}.5H${xAt(i + 1)}.5V${base}`} />
        ))}
      </g>
      <g fill="#1065d2" fillOpacity="0.4" stroke="#1a66c8" strokeWidth="1.3">
        {CUSTOMERS.map((v, i) => (
          <path key={i} d={`M${xAt(i)}.5 ${base}V${yAt(v)}.5H${xAt(i + 1)}.5V${base}`} />
        ))}
      </g>
      <path d="M43 30H778V330H43Z" fill="none" stroke="#37383c" strokeWidth="2" />
      <path d="M630 329H777" stroke="#1c59a8" strokeWidth="2" />
      <rect x="683" y="38" width="90" height="48" fill="#ffffff" fillOpacity="0.85" />
      <path d="M684.500 42.500h16v16h-16Z M684.500 66.500h16v16h-16Z" fill="#ffffff" stroke="#b9bdc8" />
      <rect x="686" y="44" width="13" height="13" fill="#9fd5f1" />
      <rect x="686" y="68" width="13" height="13" fill="#1065d2" />
      <g fontFamily="'Open Sans', sans-serif" fontSize="13" fill="#545454">
        <text x="702" y="55">Orders</text>
        <text x="702" y="79">Customers</text>
        {[0, 5, 10, 15, 20].map((v) => (
          <text key={v} x="37" y={yAt(v) + 5} textAnchor="end">
            {v}
          </text>
        ))}
        {CUSTOMERS.map((_, i) => (
          <text key={i} x={xAt(i) + 1} y="352" textAnchor="middle">
            {String(i + 1).padStart(2, "0")}
          </text>
        ))}
      </g>
    </svg>
  );
}

function RangePicker() {
  return (
    <button type="button" aria-label="Choose period" className="ml-auto flex items-center gap-2 text-[#1e86c8]">
      <Icon name="calendar" className="h-[21px]" />
      <svg viewBox="0 0 10 6" className="mt-1 h-1.5 w-2.5 fill-current" aria-hidden="true">
        <path d="M0 0h10L5 6z" />
      </svg>
    </button>
  );
}

export default function App() {
  return (
    <div className="h-screen bg-[#f1f1f1] px-[73px] pt-[155px] pb-[155px] font-['Open_Sans',sans-serif]">
      <div className="flex h-full flex-col overflow-hidden bg-[#fefefe]">
        <Header />
        <div className="flex min-h-0 flex-1">
          <Sidebar />
          <main className="min-w-0 flex-1 px-[27px]">
            <div className="flex h-[102px] items-baseline pt-3">
              <h1 className="text-[39px] text-[#848484]">Dashboard</h1>
              <nav aria-label="Breadcrumb" className="ml-5 flex gap-2 text-[15px]">
                <a href="#" className="text-[#8c8c8c]">Home</a>
                <span className="ml-1 text-[#bbbbbb]">/</span>
                <a href="#" className="text-[#3f78bd]">Dashboard</a>
              </nav>
            </div>
            <div className="grid grid-cols-4 gap-10">
              <Tile title="TOTAL ORDERS" change="0%" icon="cart" value="1.2K" />
              <Tile title="TOTAL SALES" change="0%" icon="card" value="17.3M" more="View more..." />
              <Tile title="TOTAL CUSTOMERS" change="-275%" down icon="user" value="2.2K" more="View more..." />
              <Tile title="PEOPLE ONLINE" icon="eye" value="0" more="View more..." />
            </div>
            <div className="mt-5 grid grid-cols-2 gap-10">
              <Panel>
                <WorldMap />
              </Panel>
              <Panel icon="chart" title="Sales Analytics" action={<RangePicker />}>
                <SalesChart />
              </Panel>
            </div>
            <div className="mt-[22px] grid grid-cols-3 gap-10">
              <Panel icon="calendar" title="Recent Activity" />
              <Panel icon="cart" title="Latest Orders" className="col-span-2" />
            </div>
          </main>
        </div>
      </div>
    </div>
  );
}
